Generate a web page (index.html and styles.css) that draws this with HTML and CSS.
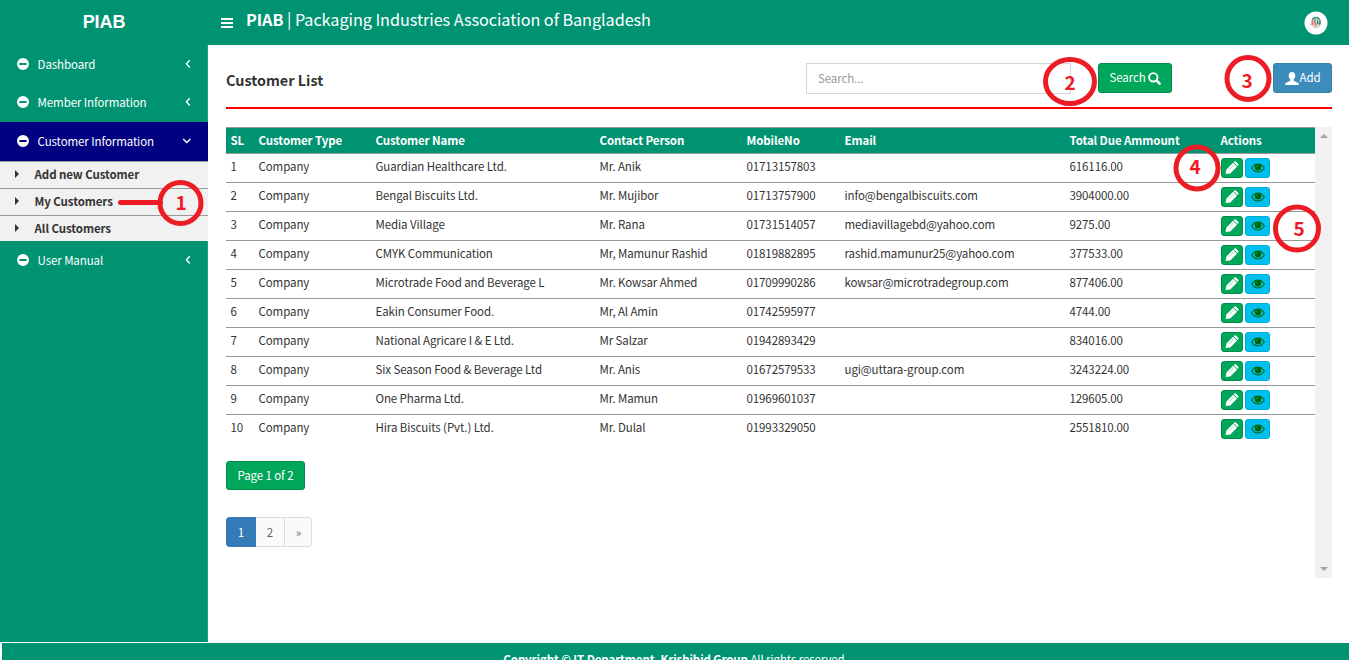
FILE: index.html
```html
<!DOCTYPE html>
<html lang="en">
<head>
<meta charset="utf-8">
<title>PIAB</title>
<link rel="stylesheet" href="styles.css">
</head>
<body>
<svg class="defs" width="0" height="0">
  <symbol id="minus" viewBox="0 0 12 12"><path fill="#fff" fill-rule="evenodd" d="M6 0a6 6 0 1 0 0 12A6 6 0 0 0 6 0ZM2.700 5h6.600q.3 0 .3.300v1.400q0 .3-.3.300H2.700q-.3 0-.3-.3V5.300q0-.3.300-.3Z"/></symbol>
  <symbol id="left" viewBox="0 0 6 10"><path fill="none" stroke="#fff" stroke-width="1.4" d="M4.8 1.2 1.4 4.8l3.4 3.6"/></symbol>
  <symbol id="down" viewBox="0 0 10 6"><path fill="none" stroke="#fff" stroke-width="1.4" d="M1.2 1.1 4.8 4.5l3.6-3.4"/></symbol>
  <symbol id="pencil" viewBox="0 0 14 14"><path fill="#fff" d="m.6 13 .8-4.500 6.700-6.700 3.900 3.900-6.700 6.700ZM8.600 1.300l.7-.7q.8-.8 1.600 0l2.200 2.200q.8.800 0 1.600l-.7.700Z"/><path stroke="#00a65a" stroke-width=".4" d="m4 8.700 4.600-4.600"/></symbol>
  <symbol id="eye" viewBox="0 0 14 10"><path fill="none" stroke="#006400" stroke-width="1.1" d="M.7 5Q3.200 1 7 1t6.300 4Q10.800 9 7 9T.7 5Z"/><circle cx="7" cy="4.300" r="3.200" fill="#006400"/><path fill="none" stroke="#00c0ef" stroke-width=".5" d="M5.200 4.200Q5.300 2.600 7 2.500"/></symbol>
</svg>
<header class="top">
  <div class="brand">PIAB</div>
  <svg class="burger" width="12" height="10" viewBox="0 0 12 10"><path fill="#fff" d="M0 0h12v2H0zM0 4h12v2H0zM0 8h12v2H0z"/></svg>
  <div class="title"><b>PIAB</b> | Packaging Industries Association of Bangladesh</div>
  <svg class="avatar" width="24" height="24" viewBox="0 0 24 24"><circle cx="12" cy="12" r="11.500" fill="#fff"/><circle cx="12" cy="11.500" r="4.700" fill="#d8ddd9"/><path fill="none" stroke="#32966e" stroke-width="1.500" d="M8 8.500q4-4 8 0M16 9v4"/><path stroke="#ef7657" stroke-width="1.800" d="M8.500 9v5M11 12l1 3"/><path stroke="#4d6e86" stroke-width="1" d="M11 8v4M13.500 9v4M15 11v3"/><path fill="none" stroke="#999" stroke-width=".9" stroke-dasharray="1 .6" d="M6.500 13q5.500 7 11 0"/></svg>
</header>
<div class="main">
  <nav class="side">
    <a class="item"><svg class="mi"><use href="#minus"/></svg><span class="t">Dashboard</span><svg class="ch"><use href="#left"/></svg></a>
    <a class="item up1"><svg class="mi"><use href="#minus"/></svg><span class="t">Member Information</span><svg class="ch"><use href="#left"/></svg></a>
    <a class="item active up1"><svg class="mi"><use href="#minus"/></svg><span class="t">Customer Information</span><svg class="chd"><use href="#down"/></svg></a>
    <div class="sub">
      <a><i></i><span>Add new Customer</span></a>
      <a><i></i><span>My Customers</span></a>
      <a><i></i><span>All Customers</span></a>
    </div>
    <a class="item"><svg class="mi"><use href="#minus"/></svg><span class="t">User Manual</span><svg class="ch"><use href="#left"/></svg></a>
  </nav>
  <section class="content">
    <div class="bar">
      <h1>Customer List</h1>
      <div class="search">Search...</div>
      <div class="btn go"><span>Search</span><svg width="13" height="13" viewBox="0 0 13 13"><circle cx="5.300" cy="5.300" r="4.200" fill="none" stroke="#fff" stroke-width="1.900"/><path stroke="#fff" stroke-width="2.400" stroke-linecap="round" d="m8.700 8.700 2.900 2.900"/></svg></div>
      <div class="btn add"><svg width="14" height="13" viewBox="0 0 14 13"><path fill="#fff" d="M7 0c2.200 0 3.300 1.500 3.300 3.600 0 1.700-.7 3-1.600 3.800v1c.5.900 2.300 1.200 3.800 2 .9.500 1.400 1.100 1.400 2.600H.1c0-1.500.5-2.100 1.400-2.600 1.500-.8 3.300-1.100 3.800-2v-1C4.400 6.600 3.700 5.300 3.700 3.600 3.700 1.500 4.800 0 7 0Z"/></svg><span>Add</span></div>
    </div>
    <div class="scroll">
      <div class="pane">
        <table>
          <colgroup><col class="c1"><col class="c2"><col class="c3"><col class="c4"><col class="c5"><col class="c6"><col class="c7"><col class="c8"></colgroup>
          <thead><tr><th>SL</th><th>Customer Type</th><th>Customer Name</th><th>Contact Person</th><th>MobileNo</th><th>Email</th><th>Total Due Ammount</th><th>Actions</th></tr></thead>
          <tbody id="rows"></tbody>
        </table>
        <div class="btn page"><span>Page 1 of 2</span></div>
        <div class="pager"><span class="on">1</span><span>2</span><span>»</span></div>
      </div>
      <div class="track"><i class="up"></i><i class="dn"></i></div>
    </div>
  </section>
</div>
<footer><div><b>Copyright © IT Department, Krishibid Group</b> All rights reserved.</div></footer>
<svg class="marks" width="1349" height="660">
  <g fill="none" stroke="#ed1c24" stroke-width="5">
    <path d="M120.500 202.500h40" stroke-linecap="round"/>
    <circle cx="180.500" cy="203" r="20.500"/>
    <ellipse cx="1070" cy="81.500" rx="24.500" ry="22"/>
    <circle cx="1248" cy="78.500" r="21"/>
    <circle cx="1197" cy="168" r="21"/>
    <circle cx="1297" cy="228.500" r="21.500"/>
  </g>
  <g class="nums" fill="#ed1c24" text-anchor="middle">
    <text x="181" y="210">1</text><text x="1070" y="90">2</text><text x="1247" y="88">3</text><text x="1195" y="174">4</text><text x="1299" y="236">5</text>
  </g>
</svg>
<script src="rows.js"></script>
</body>
</html>
```
FILE: styles.css
```css
* { box-sizing: border-box; }
html, body { margin: 0; height: 660px; overflow: hidden; }
body { position: relative; background: #fff; color: #333; font: 11.5px/20px "Noto Sans CJK SC", "Noto Sans", sans-serif; letter-spacing: -.1px; display: flex; flex-direction: column; }
.defs { position: absolute; }
svg { flex: none; display: block; }
.top { height: 45px; flex: none; background: #009371; color: #fff; display: flex; align-items: center; }
.brand { width: 208px; text-align: center; font: bold 18px/20px "Liberation Sans", Arial, sans-serif; padding-bottom: 2px; }
.burger { margin-left: 13px; }
.title { margin-left: 13px; font-size: 16.2px; letter-spacing: -.04px; line-height: 24px; padding-bottom: 7px; flex: 1; white-space: nowrap; }
.avatar { margin-right: 21px; }
.main { height: 597px; flex: none; display: flex; }
.side { width: 208px; background: #009371; color: #fff; border-right: 1px solid #229c80; }
.item { height: 38.5px; display: flex; align-items: center; padding: 0 16px 0 17px; }
.item.active { background: #000080; height: 39px; width: 208px; }
.item.up1 { padding-bottom: 1.5px; }
.mi { width: 12px; height: 12px; margin-right: 8.6px; }
.t { flex: 1; white-space: nowrap; }
.ch { width: 6px; height: 10px; }
.chd { width: 10px; height: 6px; }
.sub { background: #f1f1f1; color: #333; font-weight: bold; width: 208px; height: 80px; }
.sub a { height: 27px; border-top: 1px solid #999; display: flex; align-items: center; padding: 0 0 2px 15px; }
.sub i { border-left: 4px solid #333; border-top: 4px solid transparent; border-bottom: 4px solid transparent; margin-right: 15.6px; }
.content { flex: 1; padding: 18px 17px 0 18px; }
.bar { height: 46px; border-bottom: 2px solid #f00; display: flex; }
.bar h1 { margin: 0; width: 580px; font-size: 14.4px; letter-spacing: -.01px; line-height: 34px; }
.search { width: 265px; height: 31px; border: 1px solid #d2d6de; padding: 4px 11px; color: #999; }
.btn { height: 30px; border: 1px solid #008d4c; background: #00a65a; color: #fff; border-radius: 3px; display: flex; align-items: center; justify-content: center; }
.btn span { padding-bottom: 2px; }
.go { width: 74px; margin-left: 27px; gap: 2px; }
.add { width: 59px; margin-left: auto; background: #3c8dbc; border-color: #367fa9; gap: 1px; }
.scroll { margin-top: 18px; height: 451px; display: flex; }
.pane { width: 1089px; }
.track { width: 17px; background: #f1f1f1; display: flex; flex-direction: column; justify-content: space-between; align-items: center; padding: 7px 0; }
.track i { border-left: 4px solid transparent; border-right: 4px solid transparent; }
.up { border-bottom: 4px solid #a3a3a3; }
.dn { border-top: 4px solid #a3a3a3; }
table { width: 1089px; table-layout: fixed; border-spacing: 0; }
th, td { padding: 0 4.5px 4px; border-top: 1px solid #999; text-align: left; white-space: nowrap; }
th { background: #009371; color: #fff; height: 26px; padding-bottom: 2px; }
td { height: 29px; }
td:last-child { padding: 0 5px; }
.c1 { width: 28px; } .c2 { width: 117px; } .c3 { width: 224px; } .c4 { width: 147px; }
.c5 { width: 98px; } .c6 { width: 225px; } .c7 { width: 151px; } .c8 { width: 99px; }
.acts { display: flex; gap: 2px; }
.acts span { height: 20px; border-radius: 3px; display: flex; align-items: center; justify-content: center; }
.ed { width: 22px; background: #00a65a; border: 1px solid #008d4c; }
.vw { width: 25px; background: #00c0ef; border: 1px solid #00acd6; }
.ed svg { width: 14px; height: 14px; }
.vw svg { width: 14px; height: 10px; }
.page { width: 79px; height: 29px; margin-top: 18px; }
.pager { display: flex; margin-top: 27px; height: 30px; width: 86px; border: 1px solid #ddd; border-left: 0; border-radius: 4px; background: #fafafa; color: #666; }
.pager span { width: 28px; text-align: center; line-height: 29px; border-left: 1px solid #ddd; flex: none; }
.pager .on { width: 30px; margin: -1px 0; background: #337ab7; color: #fff; border: 0; border-radius: 4px 0 0 4px; line-height: 31px; }
.pager .on + span { border-left: 0; }
footer { margin: 1px 0 0 2px; height: 17px; flex: none; overflow: hidden; background: #009371; color: #fff; text-align: center; padding-top: 6px; }
.marks { position: absolute; left: 0; top: 0; }
.nums { font-size: 19px; font-weight: bold; }
```
FILE: rows.js
```js
const rows = [
  ["Guardian Healthcare Ltd.", "Mr. Anik", "01713157803", "", "616116.00"],
  ["Bengal Biscuits Ltd.", "Mr. Mujibor", "01713757900", "info@bengalbiscuits.com", "3904000.00"],
  ["Media Village", "Mr. Rana", "01731514057", "mediavillagebd@yahoo.com", "9275.00"],
  ["CMYK Communication", "Mr, Mamunur Rashid", "01819882895", "rashid.mamunur25@yahoo.com", "377533.00"],
  ["Microtrade Food and Beverage L", "Mr. Kowsar Ahmed", "01709990286", "kowsar@microtradegroup.com", "877406.00"],
  ["Eakin Consumer Food.", "Mr, Al Amin", "01742595977", "", "4744.00"],
  ["National Agricare I & E Ltd.", "Mr Salzar", "01942893429", "", "834016.00"],
  ["Six Season Food & Beverage Ltd", "Mr. Anis", "01672579533", "ugi@uttara-group.com", "3243224.00"],
  ["One Pharma Ltd.", "Mr. Mamun", "01969601037", "", "129605.00"],
  ["Hira Biscuits (Pvt.) Ltd.", "Mr. Dulal", "01993329050", "", "2551810.00"]
];
const actions = '<div class="acts"><span class="ed"><svg><use href="#pencil"/></svg></span><span class="vw"><svg><use href="#eye"/></svg></span></div>';
document.getElementById("rows").innerHTML = rows.map((r, i) =>
  "<tr>" + [i + 1, "Company", ...r.map(s => s.replace("&", "&amp;")), actions].map(c => `<td>${c}</td>`).join("") + "</tr>"
).join("");
```
